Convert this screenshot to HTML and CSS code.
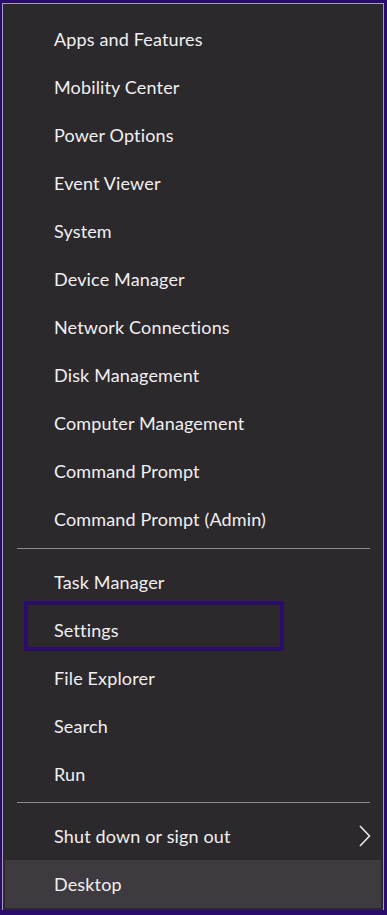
FILE: index.html
```html
<!DOCTYPE html>
<html>
<head>
<meta charset="utf-8">
<link rel="stylesheet" href="styles.css">
</head>
<body>
<div class="panel">
  <ul class="group">
    <li class="item">Apps and Features</li>
    <li class="item">Mobility Center</li>
    <li class="item">Power Options</li>
    <li class="item">Event Viewer</li>
    <li class="item">System</li>
    <li class="item">Device Manager</li>
    <li class="item">Network Connections</li>
    <li class="item">Disk Management</li>
    <li class="item">Computer Management</li>
    <li class="item">Command Prompt</li>
    <li class="item">Command Prompt (Admin)</li>
  </ul>
  <div class="divider first"></div>
  <ul class="group">
    <li class="item">Task Manager</li>
    <li class="item settings">Settings<span class="mark"></span></li>
    <li class="item">File Explorer</li>
    <li class="item">Search</li>
    <li class="item">Run</li>
  </ul>
  <div class="divider second"></div>
  <ul class="group">
    <li class="item sub">Shut down or sign out
      <svg class="chev" width="13" height="22" viewBox="0 0 13 22"><polyline points="2,1 11.5,11 2,21" fill="none" stroke="#e8e6ea" stroke-width="1.6"/></svg>
    </li>
    <li class="item active">Desktop</li>
  </ul>
</div>
</body>
</html>
```

FILE: styles.css
```css
html, body {
  margin: 0;
  padding: 0;
}
body {
  background: #2a0c6b;
  width: 387px;
  height: 915px;
  overflow: hidden;
  font-family: Lato, "Open Sans", sans-serif;
}
.panel {
  margin: 3px 3px 0 2px;
  height: 907px;
  box-sizing: border-box;
  background: #2c292d;
  border: 1px solid #a59ac6;
  border-bottom: none;
  padding-top: 11px;
}
.group {
  list-style: none;
  margin: 0;
  padding: 0;
}
.item {
  position: relative;
  height: 48px;
  display: flex;
  align-items: center;
  padding-left: 51px;
  color: #f1eff2;
  font-size: 18px;
  letter-spacing: 0.15px;
}
.divider {
  height: 1px;
  background: #8e8a90;
  margin: 5px 13px 9px 14px;
}
.divider.second {
  margin: 4px 13px 9px 14px;
}
.sub {
  justify-content: space-between;
  padding-right: 12px;
}
.chev {
  display: block;
}
.active {
  background: #3e3a3f;
  margin: 0 2px 0 2px;
  padding-left: 49px;
}
.mark {
  position: absolute;
  left: 21px;
  top: -5px;
  width: 260px;
  height: 50px;
  box-sizing: border-box;
  border: 4px solid #2a0c6b;
}
```
